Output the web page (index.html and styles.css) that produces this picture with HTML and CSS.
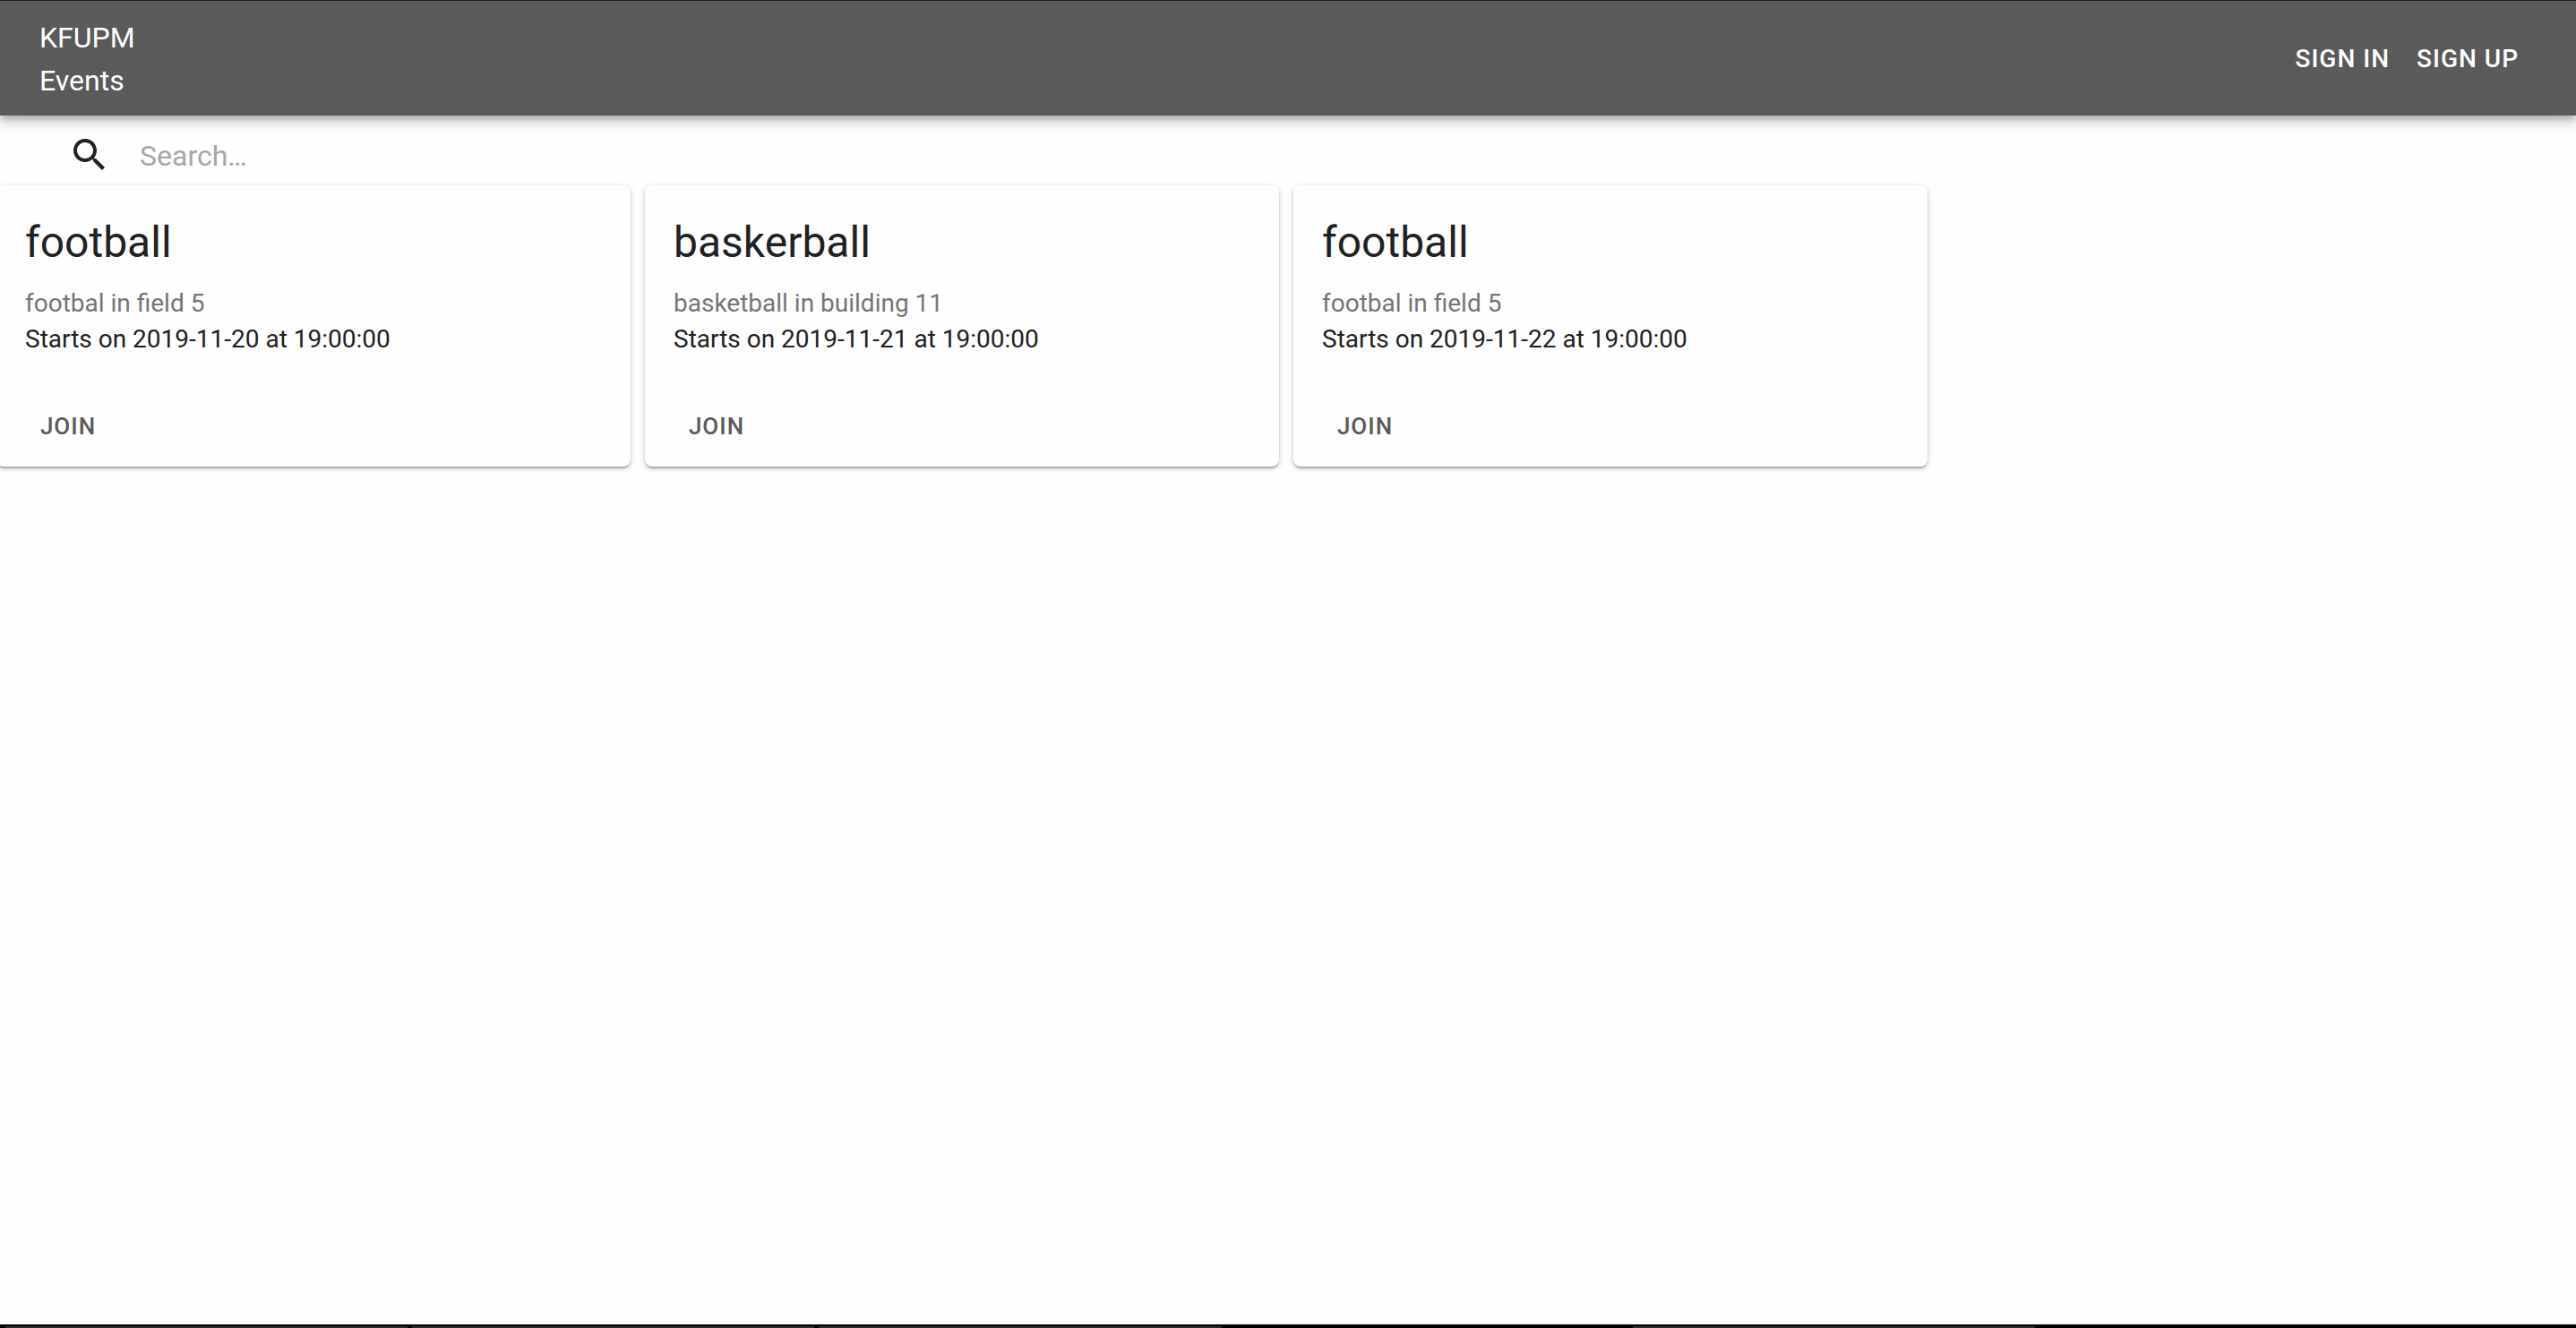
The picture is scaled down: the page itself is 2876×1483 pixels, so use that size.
FILE: index.html
```html
<!DOCTYPE html>
<html lang="en">
<head>
<meta charset="utf-8">
<meta name="viewport" content="width=device-width, initial-scale=1">
<title>KFUPM Events</title>
<link rel="stylesheet" href="styles.css">
</head>
<body>
<header class="appbar">
  <a class="brand" href="#">KFUPM<br>Events</a>
  <nav class="nav">
    <a class="nav-link" href="#">SIGN IN</a>
    <a class="nav-link" href="#">SIGN UP</a>
  </nav>
</header>
<main class="main">
  <form class="search" role="search">
    <label class="search-label" for="search">
      <svg class="search-icon" viewBox="0 0 24 24" aria-label="Search"><path d="M15.5 14h-.79l-.28-.27C15.41 12.59 16 11.11 16 9.5 16 5.91 13.09 3 9.5 3S3 5.91 3 9.5 5.91 16 9.5 16c1.61 0 3.09-.59 4.23-1.57l.27.28v.79l5 4.99L20.49 19l-4.99-5zm-6 0C7.01 14 5 11.99 5 9.5S7.01 5 9.5 5 14 7.01 14 9.5 11.99 14 9.5 14z"/></svg>
    </label>
    <input class="search-input" id="search" type="text" placeholder="Search…">
  </form>
  <section class="events">
    <article class="card">
      <div class="card-content">
        <h2 class="card-title">football</h2>
        <p class="card-text card-place">footbal in field 5</p>
        <p class="card-text">Starts on 2019-11-20 at 19:00:00</p>
      </div>
      <div class="card-actions"><button class="join" type="button">JOIN</button></div>
    </article>
    <article class="card">
      <div class="card-content">
        <h2 class="card-title">baskerball</h2>
        <p class="card-text card-place">basketball in building 11</p>
        <p class="card-text">Starts on 2019-11-21 at 19:00:00</p>
      </div>
      <div class="card-actions"><button class="join" type="button">JOIN</button></div>
    </article>
    <article class="card">
      <div class="card-content">
        <h2 class="card-title">football</h2>
        <p class="card-text card-place">footbal in field 5</p>
        <p class="card-text">Starts on 2019-11-22 at 19:00:00</p>
      </div>
      <div class="card-actions"><button class="join" type="button">JOIN</button></div>
    </article>
  </section>
</main>
<footer class="strip">
  <span class="strip-tab"></span>
  <span class="strip-tab"></span>
  <span class="strip-tab"></span>
  <span class="strip-tab strip-tab-active"></span>
  <span class="strip-tab"></span>
</footer>
</body>
</html>
```
FILE: styles.css
```css
* { box-sizing: border-box; }

body {
  margin: 0;
  min-height: 100vh;
  display: flex;
  flex-direction: column;
  overflow-x: hidden;
  background: #fefefe;
  color: #212121;
  font-family: Roboto, "Liberation Sans", sans-serif;
}

.appbar {
  display: flex;
  justify-content: space-between;
  align-items: center;
  padding: 17px 64px 15px 44px;
  border-top: 1px solid #222;
  background: #5a5a5a;
  color: #fff;
  box-shadow: 0 4px 8px -2px rgba(0, 0, 0, 0.2), 0 8px 10px rgba(0, 0, 0, 0.14), 0 2px 20px rgba(0, 0, 0, 0.12);
}

.brand {
  color: inherit;
  font-size: 32px;
  line-height: 48px;
  text-decoration: none;
}

.nav {
  display: flex;
  gap: 30px;
}

.nav-link {
  color: inherit;
  font-size: 28px;
  font-weight: 500;
  line-height: 48px;
  letter-spacing: 1px;
  text-decoration: none;
}

.main { flex: 1; }

.search {
  display: flex;
  align-items: center;
  height: 78px;
  padding: 14px 76px 4px;
  gap: 32px;
}

.search-label { display: flex; }

.search-icon {
  width: 48px;
  height: 48px;
  fill: #212121;
}

.search-input {
  flex: 1;
  padding: 2px 0 0;
  border: 0;
  outline: 0;
  background: transparent;
  color: inherit;
  font: 32px/40px Roboto, "Liberation Sans", sans-serif;
}

.search-input::placeholder {
  color: #a6a6a6;
  opacity: 1;
}

.events {
  display: grid;
  grid-template-columns: repeat(4, 1fr);
  gap: 16px;
  margin-left: -4px;
}

.card {
  border-radius: 8px;
  background: #fefefe;
  box-shadow: 0 2px 6px rgba(0, 0, 0, 0.2), 0 2px 2px rgba(0, 0, 0, 0.14), 0 4px 2px -2px rgba(0, 0, 0, 0.12);
}

.card-content { padding: 32px 32px 30px; }

.card-title {
  margin: 0 0 16px;
  font-size: 48px;
  font-weight: 400;
  line-height: 64px;
}

.card-text {
  margin: 0;
  font-size: 28px;
  line-height: 40px;
}

.card-place { color: #757575; }

.card-actions { padding: 16px 16px 14px; }

.join {
  min-width: 128px;
  padding: 8px;
  border: 0;
  background: transparent;
  color: #5a5a5a;
  font: 500 26px/46px Roboto, "Liberation Sans", sans-serif;
  letter-spacing: 1px;
}

/* Row of tabs along the bottom edge */
.strip {
  display: flex;
  gap: 5px;
  height: 4px;
  padding: 2px 21% 0 6px;
  background: #000;
}

.strip-tab {
  flex: 1;
  background: #2b2b2d;
}

.strip-tab-active { background: #000; }
```
